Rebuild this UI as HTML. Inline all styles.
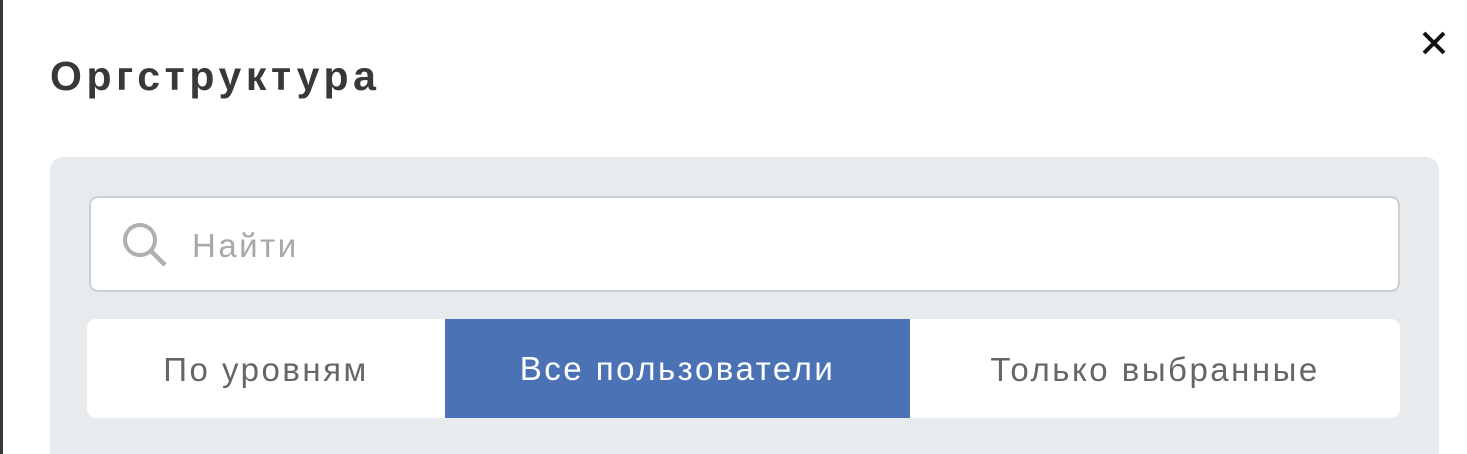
<!DOCTYPE html>
<html><head><meta charset="utf-8"><style>
html,body{margin:0;padding:0;width:1467px;height:454px;overflow:hidden;background:#fff;font-family:"Liberation Sans","DejaVu Sans",sans-serif;position:relative}
.lb{position:absolute;left:0;top:0;width:3px;height:454px;background:#3a3a3a}
.title{position:absolute;left:50px;top:53px;font-size:41px;font-weight:bold;color:#383838;letter-spacing:4.6px}
.close{position:absolute;left:1421px;top:30px}
.panel{position:absolute;left:50px;top:157px;width:1389px;height:310px;background:#e8ebee;border-radius:13px}
.search{position:absolute;left:89px;top:196px;width:1307px;height:92px;background:#fff;border:2px solid #cdcfd1;border-radius:9px}
.search span{position:absolute;left:101px;top:29px;font-size:33px;color:#a8a8a8;letter-spacing:2.5px}
.tabs{position:absolute;left:87px;top:319px;width:1313px;height:99px;background:#fff;border-radius:9px;overflow:hidden}
.tab{position:absolute;top:1px;height:99px;line-height:99px;text-align:center;font-size:33px;color:#666;letter-spacing:2.5px}
.act{background:#4a72b5;color:#fff;top:0}
</style></head><body>
<div class="lb"></div>
<div class="title">Оргструктура</div>
<svg class="close" width="26" height="26" viewBox="0 0 26 26"><path d="M3 3L23 23M23 3L3 23" stroke="#111" stroke-width="4"/></svg>
<div class="panel"></div>
<div class="search"><svg style="position:absolute;left:29px;top:22px" width="50" height="50" viewBox="0 0 50 50"><circle cx="20" cy="20" r="15" fill="none" stroke="#b0b0b0" stroke-width="4"/><path d="M31 31L45 45" stroke="#b0b0b0" stroke-width="4.5"/></svg><span>Найти</span></div>
<div class="tabs">
<div class="tab" style="left:0;width:358px">По уровням</div>
<div class="tab act" style="left:358px;width:465px">Все пользователи</div>
<div class="tab" style="left:823px;width:490px">Только выбранные</div>
</div>
</body></html>
